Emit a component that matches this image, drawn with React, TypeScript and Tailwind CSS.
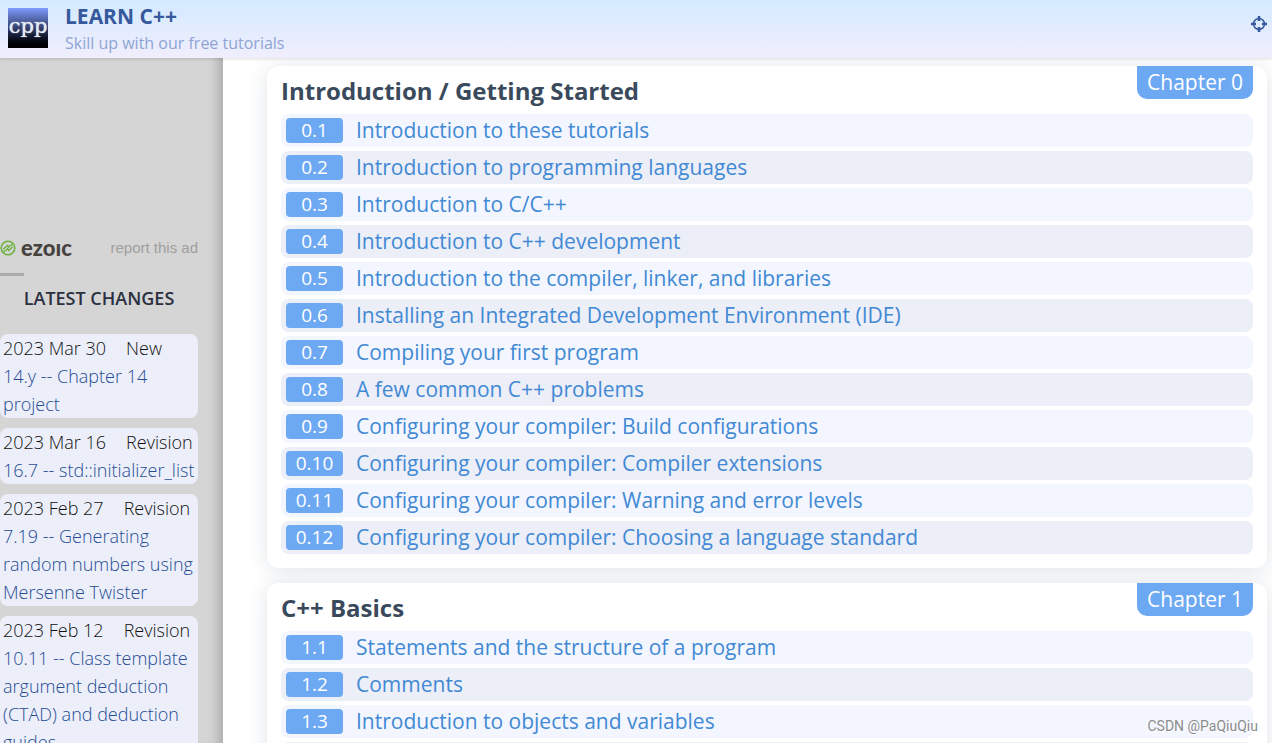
interface Lesson {
  id: string;
  title: string;
}

interface Chapter {
  label: string;
  title: string;
  lessons: Lesson[];
}

interface Change {
  date: string;
  kind: string;
  title: string;
}

const chapters: Chapter[] = [
  {
    label: "Chapter 0",
    title: "Introduction / Getting Started",
    lessons: [
      { id: "0.1", title: "Introduction to these tutorials" },
      { id: "0.2", title: "Introduction to programming languages" },
      { id: "0.3", title: "Introduction to C/C++" },
      { id: "0.4", title: "Introduction to C++ development" },
      { id: "0.5", title: "Introduction to the compiler, linker, and libraries" },
      { id: "0.6", title: "Installing an Integrated Development Environment (IDE)" },
      { id: "0.7", title: "Compiling your first program" },
      { id: "0.8", title: "A few common C++ problems" },
      { id: "0.9", title: "Configuring your compiler: Build configurations" },
      { id: "0.10", title: "Configuring your compiler: Compiler extensions" },
      { id: "0.11", title: "Configuring your compiler: Warning and error levels" },
      { id: "0.12", title: "Configuring your compiler: Choosing a language standard" },
    ],
  },
  {
    label: "Chapter 1",
    title: "C++ Basics",
    lessons: [
      { id: "1.1", title: "Statements and the structure of a program" },
      { id: "1.2", title: "Comments" },
      { id: "1.3", title: "Introduction to objects and variables" },
      { id: "1.4", title: "Variable assignment and initialization" },
    ],
  },
];

const changes: Change[] = [
  { date: "2023 Mar 30", kind: "New", title: "14.y -- Chapter 14 project" },
  { date: "2023 Mar 16", kind: "Revision", title: "16.7 -- std::initializer_list" },
  {
    date: "2023 Feb 27",
    kind: "Revision",
    title: "7.19 -- Generating random numbers using Mersenne Twister",
  },
  {
    date: "2023 Feb 12",
    kind: "Revision",
    title: "10.11 -- Class template argument deduction (CTAD) and deduction guides",
  },
];

function CrosshairIcon() {
  return (
    <svg width="16" height="16" viewBox="0 0 16 16" fill="none" stroke="#35599c">
      <circle cx="8" cy="8" r="5.5" strokeWidth="1.5" />
      <path d="M8 0v5M8 11v5M0 8h5M11 8h5" strokeWidth="2.6" />
    </svg>
  );
}

function EzoicMark() {
  return (
    <svg width="16" height="16" viewBox="0 0 16 16" fill="none" stroke="#6cb33f">
      <circle cx="8" cy="8" r="6.8" strokeWidth="1.6" />
      <path
        d="M3.2 9.2l4.6-3.9.6 2 4.2-3.4M3.6 12l4.2-3.4.6 2.1 4.4-3.9"
        strokeWidth="1.3"
        strokeLinejoin="round"
      />
    </svg>
  );
}

function Header() {
  return (
    <header
      className="
        relative
        z-10
        flex
        h-[58px]
        shrink-0
        items-start
        justify-between
        bg-linear-to-b
        from-[#d4eaff]
        to-[#f0eefd]
        pl-2
        pr-[5px]
        shadow-[0_0_4px_rgba(0,0,0,0.2)]
      "
    >
      <a href="#" className="flex gap-[17px]">
        <span
          className="
            mt-2
            flex
            size-10
            items-center
            justify-center
            bg-linear-to-b
            from-[#809cff]
            via-[#34406c]
            to-black
            pb-1
            font-['DejaVu_Serif',serif]
            text-[21px]
            leading-6
            text-[#e4ecf4]
            [text-shadow:0_0_1px_#e4ecf4]
          "
        >
          cpp
        </span>

        <span className="flex flex-col pt-[3px]">
          <span className="text-[21px] font-bold leading-[26px] text-[#35599c]">
            LEARN C++
          </span>
          <span className="text-[16px] leading-7 text-[#8fa4d4]">
            Skill up with our free tutorials
          </span>
        </span>
      </a>

      <button aria-label="Search" className="mt-4">
        <CrosshairIcon />
      </button>
    </header>
  );
}

function Sidebar() {
  return (
    <aside
      className="
        w-[223px]
        shrink-0
        overflow-hidden
        bg-[#d5d5d5]
        pr-[25px]
        pt-[180px]
        shadow-[inset_-12px_0_12px_-8px_rgba(0,0,0,0.22)]
      "
    >
      <div className="flex h-5 items-center justify-between">
        <a href="#" className="flex items-center gap-[5px]">
          <EzoicMark />
          <span className="font-['Lato',sans-serif] text-[22px] font-black leading-5 text-[#46423e]">
            ezoıc
          </span>
        </a>
        <a
          href="#"
          className="font-['Liberation_Sans',sans-serif] text-[15px] leading-5 text-[#9e9e9e]"
        >
          report this ad
        </a>
      </div>

      <div className="mt-[15px] h-[3px] w-6 bg-[#aaabad]" />

      <h2 className="mt-2 text-center text-[18px] font-semibold leading-7 text-[#2b3040]">
        LATEST CHANGES
      </h2>

      <ul className="mt-[22px] flex flex-col gap-[10px]">
        {changes.map((change) => (
          <li
            key={change.date}
            className="rounded-lg bg-[#eceff9] pl-[3px] text-[18px] font-light leading-7"
          >
            <div className="flex gap-5 text-[#111111]">
              <span>{change.date}</span>
              <span>{change.kind}</span>
            </div>
            <a href="#" className="block text-[#264c94]">
              {change.title}
            </a>
          </li>
        ))}
      </ul>
    </aside>
  );
}

function ChapterCard({ chapter }: { chapter: Chapter }) {
  return (
    <section
      className="
        rounded-xl
        bg-white
        px-[14px]
        pb-[14px]
        shadow-[0_2px_20px_rgba(60,90,120,0.16)]
      "
    >
      <div className="flex h-12 items-start justify-between">
        <h2 className="pt-2 text-[24px] font-bold leading-[34px] text-[#3a4a5c]">
          {chapter.title}
        </h2>
        <span className="rounded-b-[10px] bg-[#6da8f3] px-[10px] text-[21px] leading-[33px] text-white">
          {chapter.label}
        </span>
      </div>

      <ul className="flex flex-col gap-1">
        {chapter.lessons.map((lesson) => (
          <li
            key={lesson.id}
            className="
              flex
              h-[33px]
              items-center
              gap-[13px]
              rounded-lg
              bg-[#eceef8]
              pl-[5px]
              odd:bg-[#f3f6fe]
            "
          >
            <span
              className="
                w-[57px]
                rounded-sm
                bg-[#6da8f3]
                text-center
                text-[19px]
                leading-[25px]
                text-white
              "
            >
              {lesson.id}
            </span>
            <a href="#" className="text-[21px] leading-[33px] text-[#4289d4]">
              {lesson.title}
            </a>
          </li>
        ))}
      </ul>
    </section>
  );
}

export default function App() {
  return (
    <div
      className="
        relative
        flex
        h-screen
        flex-col
        overflow-hidden
        bg-white
        font-['Open_Sans',sans-serif]
      "
    >
      <Header />

      <div className="flex min-h-0 flex-1">
        <Sidebar />

        <main className="flex min-w-0 flex-1 flex-col gap-[15px] overflow-hidden pl-11 pr-[5px] pt-2">
          {chapters.map((chapter) => (
            <ChapterCard key={chapter.label} chapter={chapter} />
          ))}
        </main>
      </div>

      <span
        className="
          absolute
          bottom-[7px]
          right-[14px]
          font-['Roboto',sans-serif]
          text-[14px]
          leading-5
          text-[#8c8c8c]
          [text-shadow:1px_1px_0_#ffffff]
        "
      >
        CSDN @PaQiuQiu
      </span>
    </div>
  );
}
